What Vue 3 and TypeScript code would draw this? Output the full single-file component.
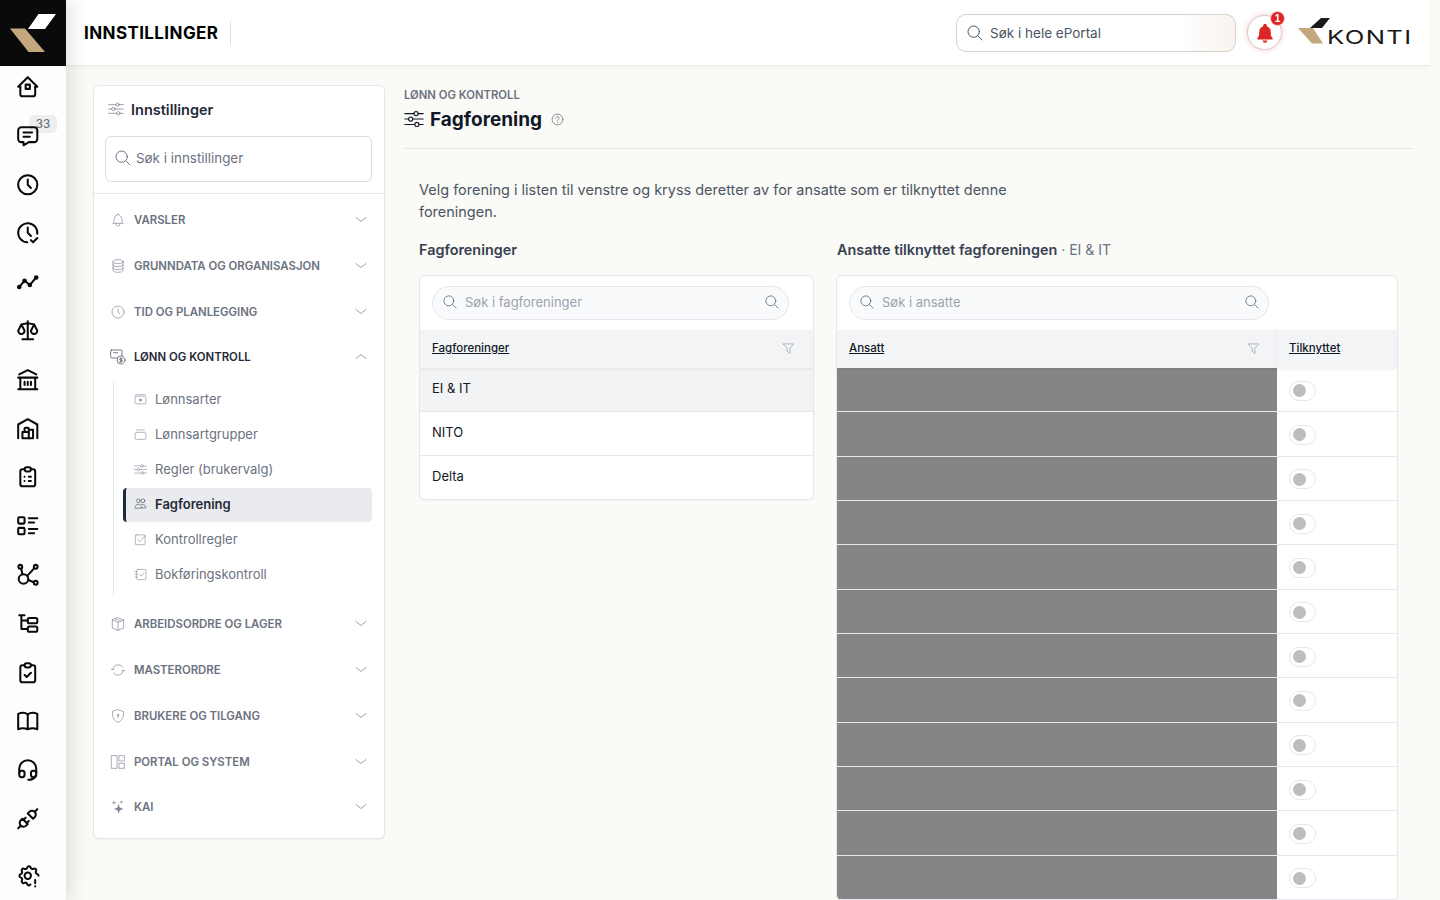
<template>
  <div class="shell">
    <aside class="rail">
      <div class="rail-logo">
        <svg width="66" height="66" viewBox="0 0 66 66">
          <polygon points="38.5,14 56,14 45,29 28,29" fill="#fff" />
          <polygon points="10,28.5 25,28.5 45,52 28.5,52" fill="#c4a77d" />
        </svg>
      </div>
      <nav class="rail-nav">
        <a v-for="item in railItems" :key="item.icon" class="rail-item" :class="{ 'rail-last': item.last }">
          <svg class="rail-icon" viewBox="0 0 24 24" v-html="icons[item.icon]"></svg>
          <span v-if="item.badge" class="rail-badge">{{ item.badge }}</span>
        </a>
      </nav>
    </aside>

    <div class="page">
      <header class="topbar">
        <div class="topbar-title">INNSTILLINGER</div>
        <div class="topbar-right">
          <div class="global-search">
            <svg class="ico search-ico" viewBox="0 0 24 24" v-html="icons.search"></svg>
            <span>Søk i hele ePortal</span>
          </div>
          <button class="bell">
            <svg width="22" height="22" viewBox="0 0 24 24">
              <path d="M12 2a2 2 0 0 0-2 2v.7C7.2 5.6 5.6 8.2 5.6 11.2v3.6L3.6 18a.8.8 0 0 0 .7 1.200h15.400a.8.8 0 0 0 .7-1.200l-2-3.200v-3.600c0-3-1.600-5.600-4.400-6.500V4a2 2 0 0 0-2-2z" fill="#dc2626" />
              <path d="M9.500 20.200a2.500 2.500 0 0 0 5 0z" fill="#dc2626" />
            </svg>
            <span class="bell-badge">1</span>
          </button>
          <div class="brand">
            <svg width="32" height="26" viewBox="0 0 32 26">
              <polygon points="23,0 32,0 24,10 12,10" fill="#1a1a1a" />
              <polygon points="0,10 15,10 25,25.5 14,25.5" fill="#c4a77d" />
            </svg>
            <span class="brand-name">KONTI</span>
          </div>
        </div>
      </header>

      <main class="main">
        <section class="settings-card">
          <div class="settings-head">
            <svg class="ico head-ico" viewBox="0 0 24 24" v-html="icons.sliders"></svg>
            <span>Innstillinger</span>
          </div>
          <div class="settings-search-wrap">
            <div class="settings-search">
              <svg class="ico" viewBox="0 0 24 24" v-html="icons.search"></svg>
              <span>Søk i innstillinger</span>
            </div>
          </div>
          <div class="groups">
            <template v-for="g in groups" :key="g.label">
              <div class="group" :class="{ open: g.open }">
                <svg class="ico group-ico" viewBox="0 0 24 24" v-html="icons[g.icon]"></svg>
                <span class="group-label">{{ g.label }}</span>
                <svg class="chev" viewBox="0 0 12 12">
                  <path :d="g.open ? 'M1 7.5l5-4 5 4' : 'M1 3.5l5 4 5-4'" />
                </svg>
              </div>
              <div v-if="g.open" class="sub">
                <div v-for="s in subItems" :key="s.label" class="sub-item" :class="{ active: s.active }">
                  <svg class="ico sub-ico" viewBox="0 0 24 24" v-html="icons[s.icon]"></svg>
                  <span>{{ s.label }}</span>
                </div>
              </div>
            </template>
          </div>
        </section>

        <section class="content">
          <div class="crumb">LØNN OG KONTROLL</div>
          <div class="title-row">
            <svg class="title-ico" viewBox="0 0 24 24" v-html="icons.sliders"></svg>
            <h1>Fagforening</h1>
            <svg class="help" viewBox="0 0 24 24">
              <circle cx="12" cy="12" r="10" />
              <path d="M9 9.5a3 3 0 1 1 4.500 2.600c-1 .6-1.500 1.100-1.500 2.400M12 17.500v.1" />
            </svg>
          </div>
          <p class="intro">Velg forening i listen til venstre og kryss deretter av for ansatte som er tilknyttet denne foreningen.</p>

          <div class="columns">
            <div>
              <h2>Fagforeninger</h2>
              <div class="panel">
                <div class="pill-row">
                  <div class="pill">
                    <svg class="ico" viewBox="0 0 24 24" v-html="icons.search"></svg>
                    <span>Søk i fagforeninger</span>
                    <svg class="ico pill-end" viewBox="0 0 24 24" v-html="icons.search"></svg>
                  </div>
                </div>
                <div class="thead">
                  <div class="th th-grow">
                    <span>Fagforeninger</span>
                    <svg class="filter" viewBox="0 0 24 24" v-html="icons.filter"></svg>
                  </div>
                </div>
                <div v-for="u in unions" :key="u" class="union-row" :class="{ selected: u === 'EI & IT' }">{{ u }}</div>
              </div>
            </div>

            <div>
              <h2 class="h2-right">Ansatte tilknyttet fagforeningen<span class="h2-sub"> · EI &amp; IT</span></h2>
              <div class="panel">
                <div class="pill-row">
                  <div class="pill pill-wide">
                    <svg class="ico" viewBox="0 0 24 24" v-html="icons.search"></svg>
                    <span>Søk i ansatte</span>
                    <svg class="ico pill-end" viewBox="0 0 24 24" v-html="icons.search"></svg>
                  </div>
                </div>
                <div class="thead">
                  <div class="th th-grow th-name">
                    <span>Ansatt</span>
                    <svg class="filter" viewBox="0 0 24 24" v-html="icons.filter"></svg>
                  </div>
                  <div class="th th-linked"><span>Tilknyttet</span></div>
                </div>
                <div v-for="n in 12" :key="n" class="emp-row">
                  <div class="emp-name"></div>
                  <div class="emp-linked"><span class="toggle"><i></i></span></div>
                </div>
              </div>
            </div>
          </div>
        </section>
      </main>
    </div>
  </div>
</template>

<script setup lang="ts">
const icons: Record<string, string> = {
  home: '<path d="M5 12H3l9-9 9 9h-2"/><path d="M5 12v7a2 2 0 0 0 2 2h10a2 2 0 0 0 2-2v-7"/><rect x="10" y="10" width="4" height="4"/>',
  message: '<path d="M8 9h8M8 13h6"/><path d="M18 4a3 3 0 0 1 3 3v8a3 3 0 0 1-3 3h-5l-5 3v-3H6a3 3 0 0 1-3-3V7a3 3 0 0 1 3-3z"/>',
  clock: '<circle cx="12" cy="12" r="9"/><path d="M12 7v5l3 3"/>',
  clockCheck: '<path d="M20.94 13a9 9 0 1 0-9.4 8"/><path d="M12 7v5l3 3M15 19l2 2 4-4"/>',
  timeline: '<path d="M4 17l5-6 5 4 6-7"/><circle cx="4" cy="17" r="1.2"/><circle cx="9" cy="11" r="1.2"/><circle cx="14" cy="15" r="1.2"/><circle cx="20" cy="8" r="1.2"/>',
  scale: '<path d="M7 20h10M6 6l6-1 6 1M12 3v17M9 12L6 6l-3 6a3 3 0 0 0 6 0M21 12l-3-6-3 6a3 3 0 0 0 6 0"/>',
  bank: '<path d="M3 21h18M3 10h18M4 7l8-4 8 4M5 10v11M19 10v11M9 14v3M12 14v3M15 14v3"/>',
  warehouse: '<path d="M3 21V8l9-5 9 5v13"/><path d="M13 13h4v8H7v-6h6"/><path d="M13 21v-9a1 1 0 0 0-1-1h-2a1 1 0 0 0-1 1v3"/>',
  clipList: '<path d="M9 5H7a2 2 0 0 0-2 2v12a2 2 0 0 0 2 2h10a2 2 0 0 0 2-2V7a2 2 0 0 0-2-2h-2"/><rect x="9" y="3" width="6" height="4" rx="2"/><path d="M9 12h.01M13 12h2M9 16h.01M13 16h2"/>',
  listDetails: '<path d="M13 5h8M13 9h5M13 15h8M13 19h5"/><rect x="3" y="4" width="6" height="6" rx="1"/><rect x="3" y="14" width="6" height="6" rx="1"/>',
  affiliate: '<circle cx="8" cy="16" r="4.5"/><circle cx="5" cy="4.5" r="1.8"/><circle cx="19.5" cy="4.5" r="1.8"/><circle cx="19.5" cy="19.5" r="1.8"/><path d="M5.8 6.2L7 11.5M11.5 13L18 6M12.500 17l5.200 2"/>',
  tree: '<path d="M4 4h5M6 4v13h6M6 9h6"/><rect x="12" y="6.5" width="9" height="5" rx="1.5"/><rect x="12" y="14.5" width="9" height="5" rx="1.5"/>',
  clipCheck: '<path d="M9 5H7a2 2 0 0 0-2 2v12a2 2 0 0 0 2 2h10a2 2 0 0 0 2-2V7a2 2 0 0 0-2-2h-2"/><rect x="9" y="3" width="6" height="4" rx="2"/><path d="M9 14l2 2 4-4"/>',
  book: '<path d="M3 5.5c3-1.300 6.500-1.300 9 .5 2.500-1.800 6-1.800 9-.5V20c-3-1.200-6-1.200-9 0-3-1.200-6-1.200-9 0zM12 6v14"/>',
  headset: '<path d="M4 15v-4a8 8 0 1 1 16 0v4M19 18c0 1.900-3 3.500-6.500 3.500"/><rect x="4" y="13" width="5" height="6" rx="2.2"/><rect x="15" y="13" width="5" height="6" rx="2.2"/>',
  plug: '<path d="M7 12l5 5-1.500 1.500a3.536 3.536 0 1 1-5-5z"/><path d="M17 12l-5-5 1.500-1.500a3.536 3.536 0 1 1 5 5z"/><path d="M3 21l2.500-2.500M18.500 5.500L21 3M10 11l-2 2M13 14l-2 2"/>',
  settingsAlert: '<path d="M14.5 20.2c-.9 1.400-2.500 1.100-3.100-.5a1.724 1.724 0 0 0-2.500-1c-1.543.94-3.310-.826-2.370-2.370a1.724 1.724 0 0 0-1.065-2.572c-1.756-.426-1.756-2.924 0-3.350a1.724 1.724 0 0 0 1.066-2.573c-.940-1.543.826-3.310 2.370-2.370 1 .608 2.296.07 2.572-1.065.426-1.756 2.924-1.756 3.350 0a1.724 1.724 0 0 0 2.573 1.066c1.543-.940 3.310.826 2.370 2.370a1.724 1.724 0 0 0 1.065 2.572c.9.2 1.300 1 1.300 1.700"/><circle cx="12" cy="12" r="3"/><path d="M19 16v3M19 22v.01"/>',
  search: '<circle cx="10" cy="10" r="8.5"/><path d="M16.500 16.500l6 6"/>',
  sliders: '<circle cx="14.5" cy="5.5" r="2.5"/><path d="M1 5.5h11M17 5.500h6"/><circle cx="8" cy="12" r="2.5"/><path d="M1 12h4.500M10.500 12H23"/><circle cx="15.5" cy="18.5" r="2.5"/><path d="M1 18.5h12M18 18.500h5"/>',
  bell: '<path d="M10 5a2 2 0 1 1 4 0 7 7 0 0 1 4 6v3a4 4 0 0 0 2 3H4a4 4 0 0 0 2-3v-3a7 7 0 0 1 4-6M9 17v1a3 3 0 0 0 6 0v-1"/>',
  database: '<ellipse cx="12" cy="5.5" rx="7.5" ry="3"/><path d="M4.5 5.5v13c0 1.700 3.400 3 7.500 3s7.500-1.300 7.500-3v-13M4.500 10c0 1.700 3.400 3 7.500 3s7.500-1.300 7.500-3M4.500 14.500c0 1.700 3.400 3 7.500 3s7.500-1.300 7.500-3"/>',
  money: '<rect x="1" y="1.5" width="17" height="12" rx="1.5"/><circle cx="16.5" cy="16.5" r="6" fill="#fff"/><path d="M18.500 14.500h-3a1 1 0 0 0 0 2.200h2a1 1 0 0 1 0 2.200h-3M16.500 13v7M5.500 5.500h6"/>',
  box: '<path d="M12 2.5l8.500 3.500v12L12 21.500 3.500 18V6zM12 9.500v12M3.500 6L12 9.500 20.500 6M7.500 4.200l8.500 3.500"/>',
  refresh: '<path d="M4 10.500a8.500 8.500 0 0 1 15-3M20 13.500a8.500 8.500 0 0 1-15 3"/><path d="M2 11h4M18 13h4"/>',
  shield: '<path d="M12 2.500l8.500 3c0 7-1.500 13-8.500 16-7-3-8.500-9-8.500-16z"/><circle cx="12" cy="10.5" r="1"/><path d="M12 11v3.500"/>',
  layout: '<rect x="2.5" y="2.5" width="8" height="19"/><rect x="14" y="2.5" width="7.5" height="8"/><rect x="14" y="14" width="7.5" height="7.5"/>',
  sparkle: '<path d="M13 9c.6 3.800 2 5.300 6 6-4 .7-5.400 2.200-6 6-.6-3.800-2-5.300-6-6 4-.7 5.400-2.200 6-6z" fill="currentColor"/><path d="M6 3v5M3.500 5.500h5M17 3v3M15.500 4.500h3"/>',
  cash: '<rect x="2" y="6" width="20" height="14" rx="1.5"/><path d="M3 3h18"/><circle cx="12" cy="13" r="2" fill="currentColor"/>',
  stack: '<rect x="2" y="8" width="20" height="13" rx="2.5"/><path d="M5 3.500h14"/>',
  users: '<circle cx="8" cy="7" r="3.5"/><circle cx="16.5" cy="7" r="3.5"/><path d="M2 20c0-4 2.500-6.500 6-6.500s6 2.500 6 6.500zM14 13.500c5 0 8 2 8 6.500h-8"/>',
  check: '<rect x="2.5" y="3.5" width="18" height="18" rx="1.5"/><path d="M7 12l4 4 10-11"/>',
  notebook: '<rect x="5" y="2.5" width="17" height="19" rx="2"/><path d="M2 7h4M2 12h4M2 17h4M10 12l3 3 5-6"/>',
  filter: '<path d="M2.500 3.500h19L14.500 12v9l-5-4v-5z"/>'
}

type RailItem = { icon: string; badge?: string; last?: boolean }

const railItems: RailItem[] = [
  { icon: 'home' },
  { icon: 'message', badge: '33' },
  { icon: 'clock' },
  { icon: 'clockCheck' },
  { icon: 'timeline' },
  { icon: 'scale' },
  { icon: 'bank' },
  { icon: 'warehouse' },
  { icon: 'clipList' },
  { icon: 'listDetails' },
  { icon: 'affiliate' },
  { icon: 'tree' },
  { icon: 'clipCheck' },
  { icon: 'book' },
  { icon: 'headset' },
  { icon: 'plug' },
  { icon: 'settingsAlert', last: true }
]

const groups = [
  { label: 'VARSLER', icon: 'bell' },
  { label: 'GRUNNDATA OG ORGANISASJON', icon: 'database' },
  { label: 'TID OG PLANLEGGING', icon: 'clock' },
  { label: 'LØNN OG KONTROLL', icon: 'money', open: true },
  { label: 'ARBEIDSORDRE OG LAGER', icon: 'box' },
  { label: 'MASTERORDRE', icon: 'refresh' },
  { label: 'BRUKERE OG TILGANG', icon: 'shield' },
  { label: 'PORTAL OG SYSTEM', icon: 'layout' },
  { label: 'KAI', icon: 'sparkle' }
]

const subItems = [
  { label: 'Lønnsarter', icon: 'cash' },
  { label: 'Lønnsartgrupper', icon: 'stack' },
  { label: 'Regler (brukervalg)', icon: 'sliders' },
  { label: 'Fagforening', icon: 'users', active: true },
  { label: 'Kontrollregler', icon: 'check' },
  { label: 'Bokføringskontroll', icon: 'notebook' }
]

const unions = ['EI & IT', 'NITO', 'Delta']
</script>

<style>
html,
body {
  margin: 0;
  height: 100%;
  overflow: hidden;
  background: #fafaf6;
}
</style>

<style scoped>
.shell {
  display: flex;
  height: 900px;
  overflow: hidden;
  font-family: Inter, "Liberation Sans", sans-serif;
  color: #111827;
  background: #fafaf6;
}

svg {
  flex: none;
  fill: none;
  stroke: currentColor;
  stroke-linecap: round;
  stroke-linejoin: round;
}

.rail {
  position: relative;
  z-index: 2;
  flex: none;
  width: 66px;
  background: #fdfdfb;
  box-shadow: 4px 0 18px rgba(0, 0, 0, 0.13);
}

.rail-logo {
  height: 66px;
  background: #0a0a0a;
}

.rail-logo svg {
  display: block;
  stroke: none;
}

.rail-nav {
  display: flex;
  flex-direction: column;
  gap: 24.8px;
  padding: 8.7px 0 0 16px;
}

.rail-item {
  position: relative;
  display: block;
  width: 24px;
  height: 24px;
}

.rail-last {
  margin-top: 8px;
}

.rail-icon {
  display: block;
  width: 25.5px;
  height: 25.5px;
  margin: -0.75px;
  color: #0a0a0a;
  stroke-width: 1.9;
}

.rail-badge {
  position: absolute;
  left: 13px;
  top: -8px;
  z-index: -1;
  width: 28px;
  height: 18px;
  border-radius: 5px;
  background: #eeeeee;
  color: #6b7280;
  font-size: 11.5px;
  font-weight: 500;
  line-height: 18px;
  text-align: center;
}

.page {
  flex: 1;
  min-width: 0;
  display: flex;
  flex-direction: column;
  padding-right: 10px;
}

.topbar {
  flex: none;
  box-sizing: border-box;
  height: 66px;
  display: flex;
  align-items: center;
  justify-content: space-between;
  padding: 0 17px 0 18px;
  background: #fff;
  border-bottom: 1px solid #ececea;
  box-shadow: 0 1px 3px rgba(0, 0, 0, 0.05);
}

.topbar-title {
  padding-right: 12px;
  border-right: 1px solid #dfdfda;
  color: #000;
  font-size: 17px;
  font-weight: 700;
  letter-spacing: 0.4px;
  line-height: 24px;
}

.topbar-right {
  display: flex;
  align-items: center;
}

.global-search {
  box-sizing: border-box;
  width: 280px;
  height: 38px;
  display: flex;
  align-items: center;
  gap: 7px;
  padding-left: 10px;
  border: 1px solid #d8d0c6;
  border-radius: 10px;
  background: linear-gradient(90deg, #fff 80%, #f8f4ef);
  color: #4b5563;
  font-size: 13.5px;
}

.ico {
  width: 16px;
  height: 16px;
  color: #6b7280;
  stroke-width: 1.5;
}

.search-ico {
  color: #4b5563;
}

.bell {
  position: relative;
  box-sizing: border-box;
  width: 35px;
  height: 35px;
  margin: 0 16px 0 11px;
  padding: 0;
  display: flex;
  align-items: center;
  justify-content: center;
  border: 1px solid #d9c9c9;
  border-radius: 50%;
  background: #fff;
  box-shadow: 0 0 5px rgba(220, 38, 38, 0.25);
}

.bell svg {
  stroke: none;
}

.bell-badge {
  position: absolute;
  top: -5px;
  right: -4px;
  width: 13px;
  height: 13px;
  border-radius: 50%;
  background: #dc2626;
  border: 1px solid #fecaca;
  color: #fff;
  font-size: 10px;
  font-weight: 700;
  line-height: 13px;
  text-align: center;
}

.brand {
  display: flex;
  align-items: flex-end;
  width: 115px;
  height: 26px;
  margin-bottom: 4px;
}

.brand svg {
  stroke: none;
}

.brand-name {
  margin: 0 0 -3px -3px;
  color: #1a1a1a;
  font-size: 19px;
  font-weight: 400;
  letter-spacing: 1px;
  line-height: 19px;
  transform: scaleX(1.35);
  transform-origin: left center;
}

.main {
  flex: 1;
  min-height: 0;
  display: flex;
  align-items: flex-start;
  gap: 19px;
  padding: 19px 17px 0 27px;
  overflow: hidden;
}

.settings-card {
  flex: none;
  box-sizing: border-box;
  width: 292px;
  padding-bottom: 8px;
  background: #fff;
  border: 1px solid #e5e7eb;
  border-radius: 6px;
  box-shadow: 0 1px 2px rgba(0, 0, 0, 0.05);
}

.settings-head {
  box-sizing: border-box;
  height: 50px;
  display: flex;
  align-items: center;
  gap: 7px;
  padding: 0 0 4px 14px;
  color: #1f2937;
  font-size: 14.5px;
  font-weight: 600;
}

.head-ico {
  stroke-width: 1;
}

.settings-search-wrap {
  padding: 0 12px 11px 11px;
  border-bottom: 1px solid #e5e7eb;
}

.settings-search {
  box-sizing: border-box;
  height: 46px;
  display: flex;
  align-items: center;
  gap: 5px;
  padding: 0 0 3px 9px;
  border: 1px solid #d9dce1;
  border-radius: 6px;
  color: #6b7280;
  font-size: 13.4px;
}

.groups {
  padding-top: 3.5px;
}

.group {
  box-sizing: border-box;
  height: 45.75px;
  display: flex;
  align-items: center;
  gap: 8px;
  padding: 0 17px 0 16px;
  color: #6b7280;
}

.group.open {
  padding-bottom: 1px;
  color: #1f2937;
}

.group-ico {
  color: #7b8494;
  stroke-width: 1;
}

.group.open .group-ico {
  color: #374151;
}

.group-label {
  flex: 1;
  font-size: 11.4px;
  font-weight: 600;
}

.chev {
  width: 12px;
  height: 12px;
  color: #9ca3af;
  stroke-width: 1;
}

.sub {
  margin: 0 12px 6px 19px;
  padding: 1px 0 4px 9px;
  border-left: 1px solid #e5e7eb;
}

.sub-item {
  box-sizing: border-box;
  height: 35px;
  display: flex;
  align-items: center;
  gap: 8px;
  padding-left: 11px;
  color: #6b7280;
  font-size: 13px;
}

.sub-ico {
  width: 13px;
  height: 13px;
  color: #8b93a1;
  stroke-width: 1.2;
}

.sub-item.active {
  height: 34px;
  margin: 1.5px 0 -0.5px;
  padding: 0 0 3px 8px;
  border-left: 3px solid #1f2937;
  border-radius: 4px;
  background: #e9ebee;
  color: #1f2937;
  font-weight: 600;
}

.sub-item.active .sub-ico {
  color: #4b5563;
}

.content {
  flex: 1;
  min-width: 0;
}

.crumb {
  height: 20px;
  color: #6b7280;
  font-size: 11.3px;
  font-weight: 600;
  line-height: 20px;
}

.title-row {
  display: flex;
  align-items: center;
  height: 28px;
  padding-bottom: 15px;
  border-bottom: 1px solid #e5e7eb;
}

.title-ico {
  width: 20px;
  height: 20px;
  margin-right: 6px;
  color: #111827;
  stroke-width: 1.3;
}

h1 {
  margin: 0 9px 0 0;
  color: #111827;
  font-size: 19px;
  font-weight: 700;
}

.help {
  width: 13px;
  height: 13px;
  color: #6b7280;
  stroke-width: 1.5;
}

.intro {
  width: 620px;
  margin: 30px 0 0 15px;
  color: #4b5563;
  font-size: 14.47px;
  line-height: 22px;
}

.columns {
  display: grid;
  grid-template-columns: 395px 562px;
  gap: 22px;
  padding: 17px 15px 0;
}

h2 {
  margin: 0 0 15px;
  color: #374151;
  font-size: 14.4px;
  font-weight: 600;
  line-height: 20px;
}

.h2-right {
  padding-left: 1px;
}

.h2-sub {
  color: #6b7280;
  font-size: 14px;
  font-weight: 400;
}

.panel {
  overflow: hidden;
  box-sizing: border-box;
  background: #fff;
  border: 1px solid #e5e7eb;
  border-radius: 6px;
  box-shadow: 0 1px 2px rgba(0, 0, 0, 0.04);
}

.pill-row {
  padding: 10px 12px;
  display: flex;
}

.pill {
  box-sizing: border-box;
  width: 357px;
  height: 34px;
  display: flex;
  align-items: center;
  gap: 8px;
  padding: 0 9px 2px 10px;
  border: 1px solid #e5e7eb;
  border-radius: 17px;
  background: #f9fafb;
  color: #9ca3af;
  font-size: 13px;
}

.pill-wide {
  width: 420px;
}

.pill .ico {
  width: 14px;
  height: 14px;
  stroke-width: 1.5;
}

.pill-end {
  margin-left: auto;
}

.thead {
  position: relative;
  box-sizing: border-box;
  display: flex;
  height: 38px;
  padding-bottom: 2px;
  background: #f3f4f6;
  box-shadow: 0 1px 3px rgba(0, 0, 0, 0.08);
}

.th {
  display: flex;
  align-items: center;
  padding: 0 12px;
  color: #111827;
  font-size: 11.5px;
  font-weight: 500;
  text-decoration: underline;
}

.th-grow {
  flex: 1;
  justify-content: space-between;
  padding-right: 18px;
}

.th-name {
  padding-right: 15px;
  border-right: 1px solid #eceef1;
}

.th-linked {
  box-sizing: border-box;
  width: 121px;
  padding-left: 13px;
}

.filter {
  width: 13px;
  height: 13px;
  color: #8f96a3;
  stroke-width: 1.2;
}

.union-row {
  box-sizing: border-box;
  height: 44px;
  display: flex;
  align-items: center;
  padding: 0 0 3px 12px;
  border-bottom: 1px solid #e5e7eb;
  color: #111827;
  font-size: 13px;
}

.union-row.selected {
  background: #f1f3f5;
}

.union-row:last-child {
  height: 43px;
  border-bottom: 0;
}

.emp-row {
  box-sizing: border-box;
  height: 44.33px;
  display: flex;
  border-bottom: 1px solid #e5e7eb;
}

.emp-name {
  flex: 1;
  background: #858585;
}

.emp-linked {
  box-sizing: border-box;
  width: 120px;
  display: flex;
  align-items: center;
  padding: 2px 0 0 12px;
}

.toggle {
  box-sizing: border-box;
  width: 27px;
  height: 20px;
  display: flex;
  align-items: center;
  padding-left: 3px;
  border: 1px solid #e5e7eb;
  border-radius: 10px;
  background: #fff;
}

.toggle i {
  width: 13px;
  height: 13px;
  border-radius: 50%;
  background: #bdbdbd;
}
</style>
